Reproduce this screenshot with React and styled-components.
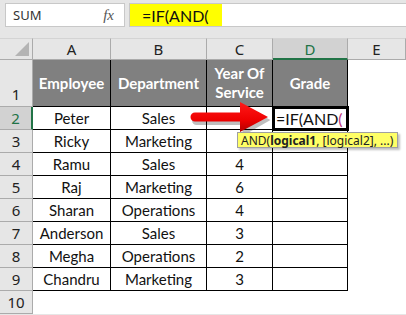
import React from 'react';
import styled, { createGlobalStyle } from 'styled-components';

const GlobalStyle = createGlobalStyle`
  body {
    margin: 0;
    background: #ffffff;
    font-family: 'Lato', 'Liberation Sans', sans-serif;
  }
`;

const Page = styled.div`
  position: relative;
  width: 406px;
  height: 315px;
  overflow: hidden;
  background: #e6e6e6;
`;

const Toolbar = styled.div`
  display: flex;
  align-items: center;
  gap: 4px;
  height: 38px;
  padding: 0 0 8px 5px;
  box-sizing: border-box;
`;

const NameBox = styled.div`
  width: 120px;
  height: 24px;
  box-sizing: border-box;
  background: #fff;
  border: 1px solid #c8c8c8;
  display: flex;
  align-items: center;
  justify-content: space-between;
  padding: 0 10px 0 7px;
  font-family: 'Noto Sans', sans-serif;
  font-size: 13px;
  color: #333;
`;

const Fx = styled.span`
  font-family: 'Liberation Serif', serif;
  font-style: italic;
  font-size: 15px;
  color: #555;
`;

const FormulaBar = styled.div`
  flex: 1;
  height: 24px;
  box-sizing: border-box;
  background: #fff;
  border: 1px solid #c8c8c8;
  border-right: none;
  display: flex;
`;

const Highlight = styled.div`
  width: 92px;
  background: #ffff00;
  display: flex;
  align-items: center;
  padding-left: 12px;
  box-sizing: border-box;
  font-family: 'Lato', sans-serif;
  font-size: 16px;
  color: #111;
`;

const Grid = styled.div`
  display: grid;
  grid-template-columns: 33px 78px 96px 66px 75px 1fr;
  grid-template-rows: 22px 47px repeat(9, 23px);
`;

const Corner = styled.div`
  background: #e6e6e6;
  border-right: 1px solid #ababab;
  border-bottom: 1px solid #ababab;
  border-top: 1px solid #d4d4d4;
  position: relative;
  &::after {
    content: '';
    position: absolute;
    right: 3px;
    bottom: 3px;
    border-left: 14px solid transparent;
    border-bottom: 14px solid #b4b4b4;
  }
`;

const ColHead = styled.div`
  display: flex;
  align-items: center;
  justify-content: center;
  background: ${(p) => (p.active ? '#d2d2d2' : '#e6e6e6')};
  border-top: 1px solid #d4d4d4;
  border-right: 1px solid #ababab;
  border-bottom: ${(p) => (p.active ? '2px solid #217346' : '1px solid #ababab')};
  color: ${(p) => (p.active ? '#217346' : '#222')};
  font-family: 'Noto Sans', sans-serif;
  font-size: 15px;
`;

const RowHead = styled.div`
  display: flex;
  align-items: ${(p) => (p.tall ? 'flex-end' : 'center')};
  justify-content: center;
  padding-bottom: ${(p) => (p.tall ? '2px' : '0')};
  box-sizing: border-box;
  background: ${(p) => (p.active ? '#d2d2d2' : '#e6e6e6')};
  border-bottom: 1px solid #ababab;
  border-right: ${(p) => (p.active ? '2px solid #217346' : '1px solid #ababab')};
  color: ${(p) => (p.active ? '#217346' : '#222')};
  font-family: 'Noto Sans', sans-serif;
  font-size: 15px;
`;

const HeadCell = styled.div`
  display: flex;
  align-items: center;
  justify-content: center;
  text-align: center;
  line-height: 19px;
  background: #808080;
  color: #fff;
  font-weight: 700;
  font-size: 15px;
  border-right: 1px solid #000;
  border-bottom: 1px solid #000;
`;

const Cell = styled.div`
  display: flex;
  align-items: center;
  justify-content: center;
  background: #fff;
  color: #111;
  font-size: 15px;
  border-right: 1px solid #000;
  border-bottom: 1px solid #000;
  white-space: nowrap;
`;

const ActiveCell = styled(Cell)`
  justify-content: flex-start;
  padding-left: 3px;
  font-size: 16px;
  position: relative;
  z-index: 2;
  outline: 3px solid #000;
  outline-offset: -2px;
`;

const Paren = styled.span`
  color: #c0367a;
`;

const Blank = styled.div`
  background: #fff;
`;

const Tooltip = styled.div`
  position: absolute;
  left: 237px;
  top: 132px;
  z-index: 3;
  height: 14px;
  padding: 0 4px 0 3px;
  display: flex;
  align-items: center;
  background: #ffff66;
  border: 1px solid #a0a0a0;
  box-shadow: 2px 2px 2px rgba(0, 0, 0, 0.25);
  font-family: 'Noto Sans', sans-serif;
  font-size: 12px;
  color: #222;
  white-space: nowrap;
  b {
    font-weight: 700;
  }
`;

const Arrow = styled.svg`
  position: absolute;
  left: 190px;
  top: 99px;
  z-index: 3;
`;

const rows = [
  ['Ricky', 'Marketing', ''],
  ['Ramu', 'Sales', '4'],
  ['Raj', 'Marketing', '6'],
  ['Sharan', 'Operations', '4'],
  ['Anderson', 'Sales', '3'],
  ['Megha', 'Operations', '2'],
  ['Chandru', 'Marketing', '3'],
];

const App = () => (
  <>
    <GlobalStyle />
    <Page>
      <Toolbar>
        <NameBox>
          SUM
          <Fx>fx</Fx>
        </NameBox>
        <FormulaBar>
          <Highlight>=IF(AND(</Highlight>
        </FormulaBar>
      </Toolbar>
      <Grid>
        <Corner />
        <ColHead>A</ColHead>
        <ColHead>B</ColHead>
        <ColHead>C</ColHead>
        <ColHead active>D</ColHead>
        <ColHead>E</ColHead>

        <RowHead tall>1</RowHead>
        <HeadCell>Employee</HeadCell>
        <HeadCell>Department</HeadCell>
        <HeadCell>
          Year Of
          <br />
          Service
        </HeadCell>
        <HeadCell>Grade</HeadCell>
        <Blank />

        <RowHead active>2</RowHead>
        <Cell>Peter</Cell>
        <Cell>Sales</Cell>
        <Cell />
        <ActiveCell>
          =IF(AND<Paren>(</Paren>
        </ActiveCell>
        <Blank />

        {rows.map((r, i) => (
          <React.Fragment key={r[0]}>
            <RowHead>{i + 3}</RowHead>
            <Cell>{r[0]}</Cell>
            <Cell>{r[1]}</Cell>
            <Cell>{r[2]}</Cell>
            <Cell />
            <Blank />
          </React.Fragment>
        ))}

        <RowHead>10</RowHead>
        <Blank />
        <Blank />
        <Blank />
        <Blank />
        <Blank />
      </Grid>

      <Arrow width="86" height="40" viewBox="0 0 86 40">
        <defs>
          <linearGradient id="ag" x1="0" y1="0" x2="0" y2="1">
            <stop offset="0" stopColor="#ff1a1a" />
            <stop offset="0.6" stopColor="#ee0000" />
            <stop offset="1" stopColor="#b00000" />
          </linearGradient>
        </defs>
        <path
          d="M5 15 H51 V4 L79 19 L51 35 V24 H5 A4.5 4.5 0 0 1 5 15 Z"
          fill="#000"
          opacity="0.25"
          transform="translate(1.5 2)"
        />
        <path d="M5 13.5 H50 V3 L78 18 L50 33 V22.5 H5 A4.5 4.5 0 0 1 5 13.5 Z" fill="url(#ag)" />
      </Arrow>

      <Tooltip>
        AND(<b>logical1</b>, [logical2], ...)
      </Tooltip>
    </Page>
  </>
);

export default App;
